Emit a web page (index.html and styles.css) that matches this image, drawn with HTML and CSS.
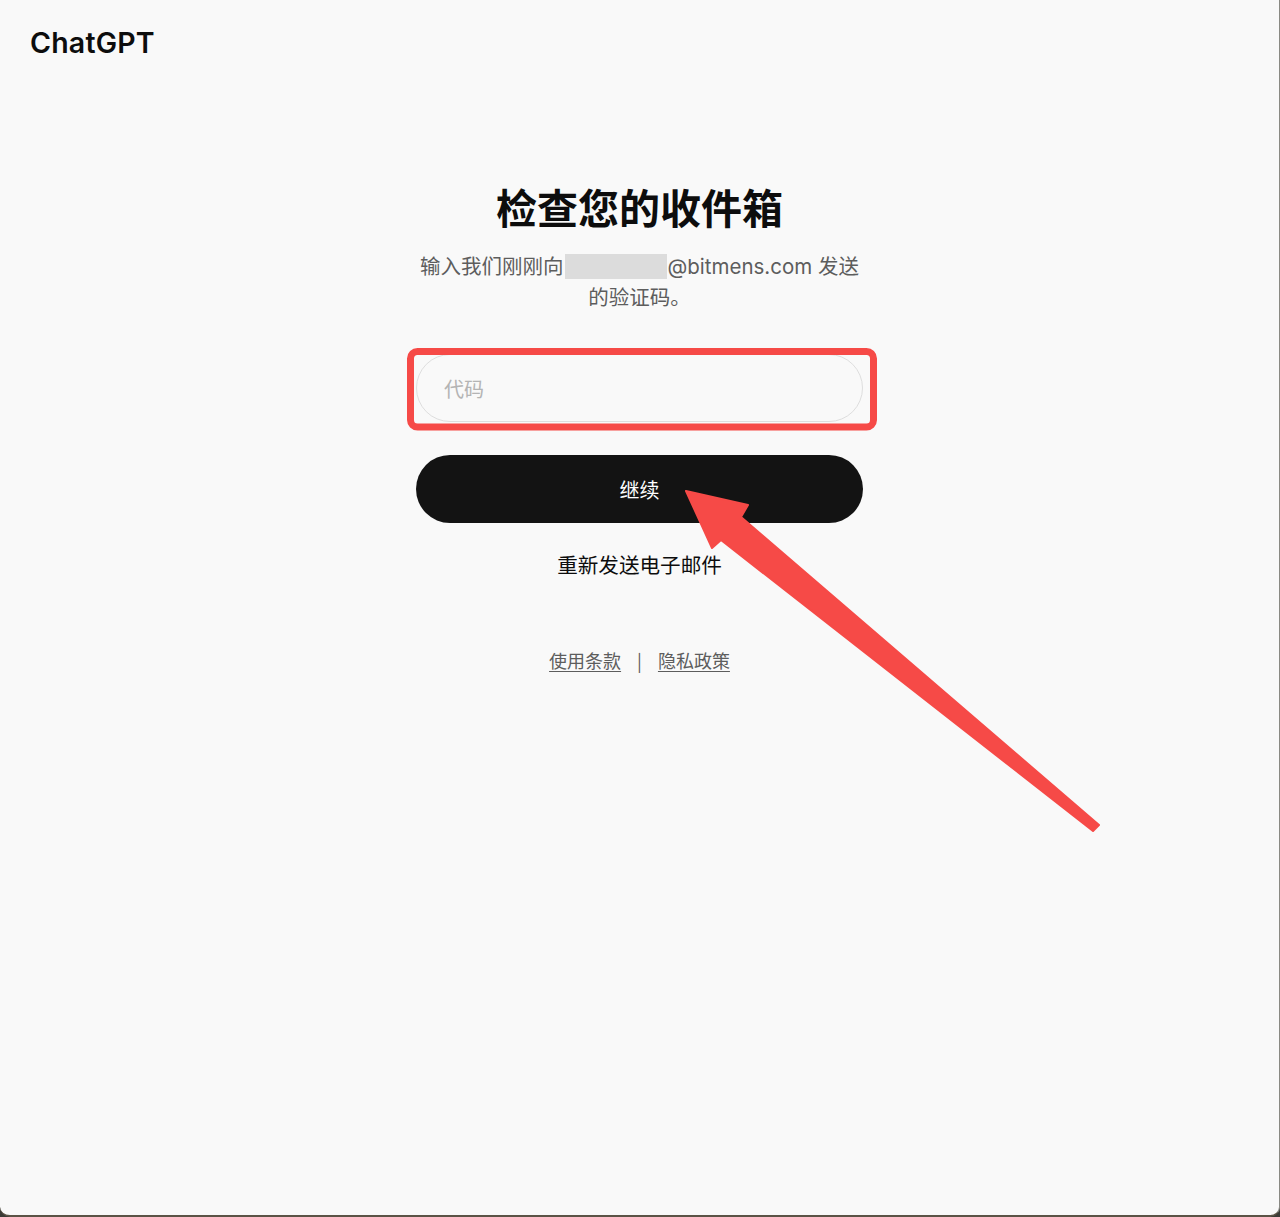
FILE: index.html
```html
<!DOCTYPE html>
<html lang="zh-CN">
<head>
<meta charset="utf-8">
<title>检查您的收件箱 - ChatGPT</title>
<link rel="stylesheet" href="styles.css">
</head>
<body>
<div class="window">
  <header class="header">
    <div class="logo">ChatGPT</div>
  </header>
  <main class="main">
    <section class="card">
      <h1 class="title">检查您的收件箱</h1>
      <p class="subtitle">输入我们刚刚向<span class="redact"></span>@bitmens.com 发送的验证码。</p>
      <input class="field" type="text" placeholder="代码">
      <button class="btn">继续</button>
      <a class="resend" href="#">重新发送电子邮件</a>
      <footer class="footer">
        <a class="flink" href="#">使用条款</a>
        <span class="sep">|</span>
        <a class="flink" href="#">隐私政策</a>
      </footer>
    </section>
  </main>
  <svg class="annot" width="1280" height="1217" viewBox="0 0 1280 1217" aria-hidden="true">
    <rect x="410.5" y="351.5" width="463" height="75.5" rx="7" ry="7" fill="none" stroke="#f64a47" stroke-width="7"/>
    <polygon points="686,491 748,505 741,517 1099,825 1093,831 721,540 712,548" fill="#f64a47" stroke="#f64a47" stroke-width="2" stroke-linejoin="round"/>
  </svg>
</div>
</body>
</html>
```

FILE: styles.css
```css
html, body {
  margin: 0;
  padding: 0;
  background: #3b3b36;
}
.window {
  position: relative;
  box-sizing: border-box;
  width: 1280px;
  height: 1217px;
  background: #f9f9f9;
  border-right: 1px solid #8a8a84;
  border-bottom: 2px solid #5b5346;
  border-radius: 0 0 10px 10px;
  overflow: hidden;
  font-family: Inter, "Noto Sans CJK SC", sans-serif;
  color: #0d0d0d;
}
.header {
  padding: 26px 0 0 30px;
  height: 40px;
}
.logo {
  font-family: Inter, "Liberation Sans", sans-serif;
  font-weight: 600;
  font-size: 28.5px;
  line-height: 33px;
  letter-spacing: 0.2px;
  color: #0d0d0d;
}
.main {
  display: flex;
  justify-content: center;
  padding-top: 114px;
}
.card {
  width: 447px;
  display: flex;
  flex-direction: column;
  align-items: center;
}
.title {
  margin: 0;
  font-family: "Noto Sans CJK SC", sans-serif;
  font-size: 41px;
  font-weight: 700;
  line-height: 52px;
  color: #0d0d0d;
}
.subtitle {
  margin: 19px 0 0 0;
  width: 447px;
  text-align: center;
  font-family: Inter, "Noto Sans CJK SC", sans-serif;
  font-size: 20.5px;
  line-height: 31px;
  color: #5d5d5d;
}
.redact {
  display: inline-block;
  width: 102px;
  height: 25px;
  background: #dcdcdc;
  vertical-align: -5px;
  margin: 0 1px;
}
.field {
  margin-top: 41px;
  display: block;
  box-sizing: border-box;
  width: 447px;
  height: 68px;
  border: 1px solid #dedede;
  border-radius: 34px;
  background: #f9f9f9;
  padding: 0 27px;
  font-family: "Noto Sans CJK SC", sans-serif;
  font-size: 20px;
  color: #0d0d0d;
  outline: none;
}
.field::placeholder {
  color: #b4b4b4;
}
.btn {
  margin-top: 33px;
  width: 447px;
  height: 68px;
  border: none;
  border-radius: 34px;
  background: #131313;
  color: #ffffff;
  font-family: "Noto Sans CJK SC", sans-serif;
  font-size: 20px;
  cursor: pointer;
}
.resend {
  margin-top: 26px;
  font-family: "Noto Sans CJK SC", sans-serif;
  font-size: 20.6px;
  line-height: 30px;
  color: #0d0d0d;
  text-decoration: none;
}
.footer {
  margin-top: 68px;
  display: flex;
  align-items: center;
  gap: 16px;
  font-family: "Noto Sans CJK SC", sans-serif;
  font-size: 18px;
  line-height: 26px;
  color: #5d5d5d;
}
.flink {
  color: #5d5d5d;
  text-decoration: underline;
  text-underline-offset: 3px;
}
.sep {
  color: #5d5d5d;
}
.annot {
  position: absolute;
  left: 0;
  top: 0;
  pointer-events: none;
}
```
